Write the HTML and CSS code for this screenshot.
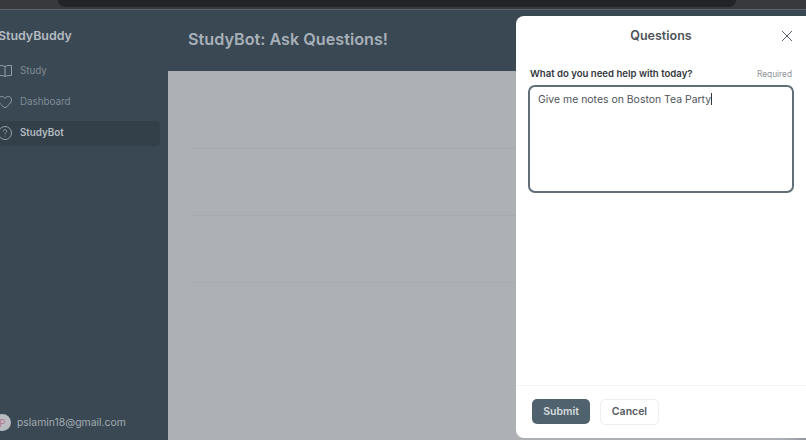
FILE: index.html
```html
<!DOCTYPE html>
<html lang="en">
<head>
<meta charset="utf-8">
<title>StudyBuddy</title>
<link rel="stylesheet" href="styles.css">
</head>
<body>
<div class="chrome">
  <div class="urlbar"></div>
</div>
<div class="app">
  <aside class="sidebar">
    <div class="brand">StudyBuddy</div>
    <nav class="nav">
      <div class="nav-item">
        <svg class="nav-icon" viewBox="0 0 16 16" fill="none" stroke="currentColor" stroke-width="1"><path d="M8 3.500C6.500 2.600 3.500 2.300 1.500 2.600V12.600C3.500 12.300 6.500 12.600 8 13.500C9.500 12.600 12.500 12.300 14.500 12.600V2.600C12.500 2.300 9.500 2.600 8 3.500ZM8 3.500V13.500"/></svg>
        <span>Study</span>
      </div>
      <div class="nav-item">
        <svg class="nav-icon" viewBox="0 0 16 16" fill="none" stroke="currentColor" stroke-width="1"><path d="M8 14C5 11.500 1.500 9 1.500 5.800C1.500 3.700 3 2.500 4.700 2.500C6 2.500 7.300 3.200 8 4.500C8.700 3.200 10 2.500 11.300 2.500C13 2.500 14.500 3.700 14.500 5.800C14.500 9 11 11.500 8 14Z"/></svg>
        <span>Dashboard</span>
      </div>
      <div class="nav-item active">
        <svg class="nav-icon" viewBox="0 0 16 16" fill="none" stroke="currentColor" stroke-width="1"><circle cx="8" cy="8" r="6.500"/><path d="M6.200 6.300C6.200 5.200 7 4.600 8 4.600C9 4.600 9.800 5.300 9.800 6.200C9.800 7.500 8 7.600 8 9.200M8 10.800V11.500"/></svg>
        <span>StudyBot</span>
      </div>
    </nav>
    <div class="user">
      <span class="avatar">P</span>
      <span class="email">pslamin18@gmail.com</span>
    </div>
  </aside>
  <main class="content">
    <header class="page-head">
      <h1 class="page-title">StudyBot: Ask Questions!</h1>
    </header>
    <section class="panel">
      <div class="rule"></div>
      <div class="rule"></div>
      <div class="rule"></div>
    </section>
  </main>
</div>
<div class="modal">
  <div class="modal-head">
    <h2 class="modal-title">Questions</h2>
    <svg class="close" viewBox="0 0 12 12" fill="none" stroke="currentColor" stroke-width="1"><path d="M1 1L11 11M11 1L1 11"/></svg>
  </div>
  <div class="modal-body">
    <div class="field-head">
      <span class="field-label">What do you need help with today?</span>
      <span class="field-req">Required</span>
    </div>
    <div class="textarea"><span>Give me notes on Boston Tea Party</span><i class="caret"></i></div>
  </div>
  <div class="modal-foot">
    <button class="btn btn-primary">Submit</button>
    <button class="btn btn-ghost">Cancel</button>
  </div>
</div>
</body>
</html>
```
FILE: styles.css
```css
* { box-sizing: border-box; }
html, body { margin: 0; height: 100%; overflow: hidden; }
body {
  width: 806px;
  height: 440px;
  display: flex;
  flex-direction: column;
  position: relative;
  font-family: Inter, "Liberation Sans", sans-serif;
  background: #3a4853;
}
.chrome {
  height: 10px;
  flex: none;
  background: #37393c;
  border-bottom: 1px solid #5c6268;
  padding-left: 58px;
  padding-right: 70px;
}
.urlbar {
  height: 7px;
  background: #222427;
  border-radius: 0 0 10px 10px;
}
.app { flex: 1; display: flex; min-height: 0; }
.sidebar {
  width: 168px;
  flex: none;
  display: flex;
  flex-direction: column;
  background: #3a4853;
  padding: 0 8px 0 0;
}
.brand {
  font-size: 12.400px;
  font-weight: 600;
  color: #b4bcc3;
  margin: 17px 0 0 -2px;
  line-height: 18px;
}
.nav { display: flex; flex-direction: column; gap: 6px; margin-top: 14px; }
.nav-item {
  height: 25px;
  display: flex;
  align-items: center;
  gap: 7px;
  font-size: 9.800px;
  color: #808c96;
  border-radius: 4px;
  margin-left: -4px;
  padding-left: 4px;
  padding-bottom: 2px;
}
.nav-icon { width: 16px; height: 16px; flex: none; margin-left: -3px; color: #95a0a9; }
.nav-item.active { background: #33404a; color: #b4bbc1; font-weight: 600; }
.user {
  margin-top: auto;
  margin-bottom: 9px;
  margin-left: -6px;
  display: flex;
  align-items: center;
  gap: 6px;
}
.avatar {
  width: 17px;
  height: 17px;
  border-radius: 50%;
  background: #b9bcc1;
  color: #b5798f;
  font-size: 10px;
  display: flex;
  align-items: center;
  justify-content: center;
}
.email { font-size: 10.400px; color: #a2abb2; }
.content { flex: 1; display: flex; flex-direction: column; min-width: 0; }
.page-head { height: 61px; flex: none; padding: 19px 0 0 20px; }
.page-title { margin: 0; font-size: 16.200px; line-height: 20px; font-weight: 600; color: #a7b0b8; }
.panel {
  flex: 1;
  background: #adb0b5;
  padding: 77px 0 0 24px;
  display: flex;
  flex-direction: column;
  gap: 66px;
  box-shadow: inset -28px 0 20px -20px rgba(100, 104, 115, .45);
}
.rule { height: 1px; background: #a6a9ae; }
.modal {
  position: absolute;
  left: 516px;
  top: 16px;
  width: 300px;
  height: 422px;
  background: #fff;
  border-radius: 8px;
  display: flex;
  flex-direction: column;
  color: #4b4f55;
}
.modal-head {
  height: 38px;
  flex: none;
  width: 290px;
  display: flex;
  align-items: center;
  justify-content: center;
  position: relative;
}
.modal-title { margin: 0; font-size: 12.500px; font-weight: 600; color: #4f5359; }
.close { position: absolute; right: 13px; top: 14px; width: 12px; height: 12px; color: #5a5f65; }
.modal-body { flex: 1; width: 290px; padding: 12px 12px 0 12px; }
.field-head {
  display: flex;
  justify-content: space-between;
  align-items: center;
  height: 14px;
  margin-bottom: 5px;
}
.field-label { font-size: 9.600px; font-weight: 600; color: #33373c; margin-left: 2px; }
.field-req { font-size: 8.300px; color: #8d9197; margin: 1px 2px 0 0; }
.textarea {
  height: 108px;
  border: 2px solid #5f6e77;
  border-radius: 7px;
  padding: 6px 8px;
  font-size: 10.450px;
  line-height: 14px;
  color: #50545a;
}
.caret { display: inline-block; width: 1px; height: 12px; background: #33373c; vertical-align: -2px; }
.modal-foot {
  height: 53px;
  flex: none;
  border-top: 1px solid #f3f4f5;
  display: flex;
  align-items: center;
  gap: 10px;
  padding: 0 0 1px 16px;
}
.btn { font-family: inherit; font-size: 10.500px; font-weight: 600; height: 25px; border-radius: 5px; }
.btn-primary { width: 58px; background: #4f626d; color: #d5dadd; border: none; }
.btn-ghost { width: 59px; height: 26px; background: #fff; color: #55595f; border: 1px solid #eceef0; }
```
